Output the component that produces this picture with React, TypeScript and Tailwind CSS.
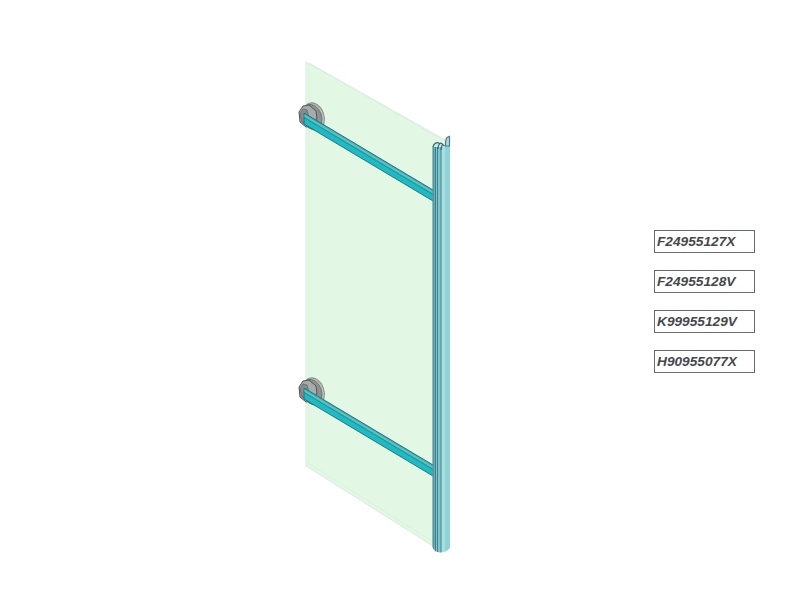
const labels = ["F24955127X", "F24955128V", "K99955129V", "H90955077X"];

function Bracket({ dy }: { dy: number }) {
  return (
    <g transform={`translate(0 ${dy})`}>
      {/* wall disc */}
      <ellipse cx="314" cy="116.5" rx="10" ry="14" transform="rotate(-20 314 116.5)" fill="#bcc1bb" stroke="#8d938d" strokeWidth="1" />
      <ellipse cx="312" cy="117" rx="9.5" ry="13" transform="rotate(-20 312 117)" fill="#8f9492" stroke="#666c6b" strokeWidth="0.8" />
      <polygon points="299,112 303,106 309,105 316,111 317,118 313,126 306,127 300,122" fill="#a7acaa" stroke="#4e5453" strokeWidth="1" />
      <polygon points="300,114 303,109 307,110 309,118 307,125 302,122" fill="#8a8f8d" stroke="#5a605f" strokeWidth="0.7" />
      {/* bar */}
      <polygon points="304,113 433,190 433,201 304,124" fill="#1cbcc4" />
      <polygon points="304,113 433,190 433,194.5 304,117.5" fill="#45b4ba" />
      <path d="M304 113 L433 190 M304 124 L433 201 M304 113 V124" stroke="#1f6a73" strokeWidth="0.9" fill="none" />
      <path d="M304 115.5 L433 192.5" stroke="#86d3d6" strokeWidth="0.6" fill="none" />
      <path d="M304 117.5 L433 194.5" stroke="#23808a" strokeWidth="0.8" fill="none" />
      <path d="M434.5 194 v2 M434.5 199 v2" stroke="#35565a" strokeWidth="1" />
    </g>
  );
}

function ShowerPanel() {
  return (
    <svg viewBox="280 50 200 520" className="w-[200px] h-[520px] shrink-0">
      <defs>
        <clipPath id="profile">
          <path d="M432.5 147 Q433 143 437 142 L445 144 L450 143 V548 Q446 552.5 440 552.5 Q434 552 432.5 547 Z" />
        </clipPath>
      </defs>

      {/* glass */}
      <polygon points="306,62 447,142 447,200 433,546 306,466" fill="#e3f8e4" stroke="#d6eddf" strokeWidth="1" />
      <path d="M309 63 L447 141 M309 63 V467 M306 462 L432 541" stroke="#dbf0df" strokeWidth="1" fill="none" />

      <Bracket dy={0} />
      <Bracket dy={275} />

      {/* upright profile */}
      <g clipPath="url(#profile)">
        <rect x="432" y="140" width="4" height="415" fill="#6aaeb7" />
        <rect x="436" y="140" width="5" height="415" fill="#7cc5cb" />
        <rect x="441" y="140" width="4" height="415" fill="#a8dee1" />
        <rect x="445" y="140" width="5" height="415" fill="#90d3d7" />
        <path d="M433 140 V555 M435.5 140 V555 M437.5 140 V555 M441 140 V555" stroke="#35707a" strokeWidth="0.8" fill="none" />
      </g>

      {/* top of the profile, with the hook */}
      <path d="M445.5 146 Q445.5 139 447 137.5 L449.5 136.5 V146 Z" fill="#b5dcdc" stroke="#4b7a82" strokeWidth="1.2" />
      <path d="M433 147 Q434 143 438 142 L445 144 L445 147 Z" fill="#cfe9e8" />
      <path d="M433 147 Q434 143 438 142.5 L440 144 M438 149 Q438 144 441 143 L444.5 146 M441 150 L442 145" stroke="#2f626c" strokeWidth="1.1" fill="none" />
    </svg>
  );
}

export default function App() {
  return (
    <div className="w-[800px] h-[600px] bg-white flex items-start overflow-hidden pl-[280px] pt-[50px]">
      <ShowerPanel />
      <div className="flex flex-col gap-[17px] mt-[180px] ml-[174px]">
        {labels.map((code) => (
          <div
            key={code}
            className="w-[101px] h-[23px] border border-[#666b6e] pl-[2px] pt-[1px] flex items-center text-[13.7px] font-bold italic text-[#45484b] font-['Liberation_Sans',Arial,sans-serif]"
          >
            {code}
          </div>
        ))}
      </div>
    </div>
  );
}
